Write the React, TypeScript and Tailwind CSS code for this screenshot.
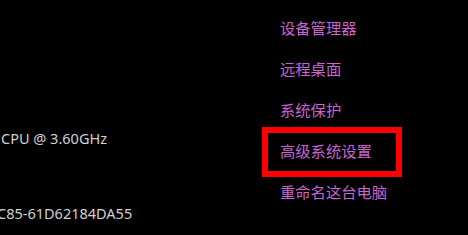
import React from 'react';

const links = ['设备管理器', '远程桌面', '系统保护', '高级系统设置', '重命名这台电脑'];

export default function App() {
  return (
    <div
      className="w-[468px] h-[235px] bg-black overflow-hidden flex"
      style={{ fontFamily: '"Segoe UI", "Noto Sans", "Noto Sans CJK SC", sans-serif' }}
    >
      {/* left: system info values, clipped by the crop */}
      <div className="w-[280px] shrink-0 text-[14.5px] text-[#d0d0d0] pt-[127px]">
        <div className="leading-[22px] pl-[1px]">CPU @ 3.60GHz</div>
        <div className="leading-[22px] mt-[53px] -ml-[3px]">C85-61D62184DA55</div>
      </div>

      {/* right: related settings links */}
      <div className="relative flex flex-col pt-[8px] text-[15.3px] text-[#c964d4]">
        {links.map((l) => (
          <div key={l} className="leading-[41px] whitespace-nowrap">
            {l}
          </div>
        ))}
        <div className="absolute left-[-18px] top-[127px] w-[140px] h-[50px] border-[6px] border-[#ff0000]" />
      </div>
    </div>
  );
}
